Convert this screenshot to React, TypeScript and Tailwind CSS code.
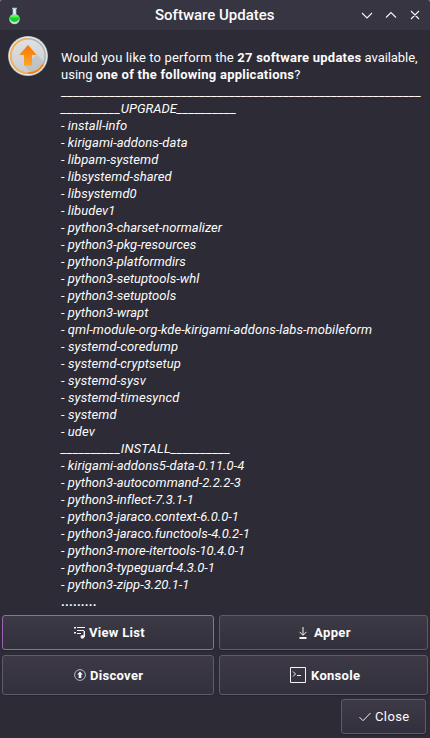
import React from "react";

const upgrades = [
  "install-info", "kirigami-addons-data", "libpam-systemd", "libsystemd-shared", "libsystemd0",
  "libudev1", "python3-charset-normalizer", "python3-pkg-resources", "python3-platformdirs",
  "python3-setuptools-whl", "python3-setuptools", "python3-wrapt",
  "qml-module-org-kde-kirigami-addons-labs-mobileform", "systemd-coredump", "systemd-cryptsetup",
  "systemd-sysv", "systemd-timesyncd", "systemd", "udev",
];

const installs = [
  "kirigami-addons5-data-0.11.0-4", "python3-autocommand-2.2.2-3", "python3-inflect-7.3.1-1",
  "python3-jaraco.context-6.0.0-1", "python3-jaraco.functools-4.0.2-1",
  "python3-more-itertools-10.4.0-1", "python3-typeguard-4.3.0-1", "python3-zipp-3.20.1-1",
];

function FlaskIcon() {
  return (
    <svg width="12" height="18" viewBox="0 0 12 18">
      <path d="M3 .8h5v1H7.3v5.4A5.2 5.2 0 1 1 3.7 7.2V1.8H3z" fill="#b9d3dc" />
      <path d="M4.4 2h2v5h-2z" fill="#d9f0f6" />
      <path d="M1 8.8h9.2a4.8 4.8 0 1 1-9.2 0z" fill="#12d422" />
      <path d="M1.4 9h8.4v1.4H1.2z" fill="#5cf060" />
      <path d="M3 15.6h5" stroke="#c4e6d0" strokeWidth="1" />
    </svg>
  );
}

function UpdateIcon() {
  return (
    <svg width="40" height="40" viewBox="0 0 40 40">
      <defs>
        <linearGradient id="disc" x1="0" y1="0" x2="0" y2="1">
          <stop offset="0" stopColor="#dfe1e2" /><stop offset="1" stopColor="#c9cccd" />
        </linearGradient>
        <linearGradient id="arrow" x1="0" y1="0" x2="0" y2="1">
          <stop offset="0" stopColor="#f67400" /><stop offset="1" stopColor="#fda62e" />
        </linearGradient>
      </defs>
      <circle cx="20" cy="20" r="20" fill="#a2a7aa" />
      <circle cx="20" cy="20" r="19.4" fill="#e3e7e8" />
      <circle cx="20" cy="20" r="18" fill="url(#disc)" />
      <path d="M29 19 36 26A17 17 0 0 1 23 36.5L16 29.4z" fill="#a9acae" opacity=".4" />
      <circle cx="20" cy="20" r="17.2" fill="none" stroke="#aeb1b3" strokeWidth="1.5" />
      <path d="M20 2.8A17.2 17.2 0 0 0 20 37.2" fill="none" stroke="#fdb04a" strokeWidth="1.6" />
      <path d="M20 37.2A17.2 17.2 0 0 0 35 28.5" fill="none" stroke="#f67f0c" strokeWidth="1.6" />
      <path d="M20 9 28.8 19H24V29.4H16V19H11.2z" fill="url(#arrow)" />
    </svg>
  );
}

function PlaylistIcon() {
  return (
    <svg width="12" height="13" viewBox="0 0 12 13" fill="#f4f4f5">
      <path d="M0 1h2v1.6H0zM0 6h2v1.6H0zM3 1h8v1H3zM3 4h7v1H3zM3 7h4v1H3zM9.6 5H11v6H9.6z" />
      <circle cx="8.4" cy="10.8" r="1.9" />
    </svg>
  );
}

function DiscoverIcon() {
  return (
    <svg width="12" height="12" viewBox="0 0 12 12">
      <circle cx="6" cy="6" r="5.4" fill="none" stroke="#bccad8" strokeWidth=".9" />
      <path d="M6 2.5 8.7 5.5H7.3V9H4.7V5.5H3.3z" fill="#f4f8fc" />
    </svg>
  );
}

function DownloadIcon() {
  return (
    <svg width="8" height="12" viewBox="0 0 8 12">
      <path d="M4 0v8M.5 4.8 4 8.3 7.5 4.8" fill="none" stroke="#f4f4f5" strokeWidth="1" />
      <path d="M.5 10h7v2h-7z" fill="#f4f4f5" />
    </svg>
  );
}

function KonsoleIcon() {
  return (
    <svg width="16" height="16" viewBox="0 0 16 16" fill="none" stroke="#f4f4f5">
      <path d="M.5 .5h15v15H.5zM3 4.5 5.5 7 3 9.5M7 8.5h4" />
    </svg>
  );
}

function Package({ name }: { name: string }) {
  const tracking = name.startsWith("systemd")
    ? "tracking-[0.12px]"
    : name.startsWith("python3")
      ? "tracking-[0.02px]"
      : "tracking-[0.06px]";
  return <p className={tracking}><span>- {name}</span></p>;
}

function Section({ title }: { title: string }) {
  const rule = "_".repeat(10);
  const tracking = title === "INSTALL" ? "tracking-[0.2px]" : "";
  return (
    <p>
      <span className="tracking-[0.29px]">{rule}</span><span className={tracking}>{title}</span><span className="tracking-[0.29px]">{rule}</span>
    </p>
  );
}

const button =
  "flex items-center rounded-[3px] border bg-linear-to-b from-[#3d3a46] to-[#32303c] shadow-[0_1px_1px_#25232d] whitespace-nowrap";

export default function App() {
  return (
    <div className="h-[738px] w-[430px] overflow-hidden bg-[#7b6a88]">
    <div className="flex h-[738px] w-[430px] flex-col overflow-hidden rounded-t-[4px] bg-[#2d2b36] font-['Roboto','Liberation_Sans',sans-serif] text-[13px] leading-[17px] text-[#fcfcfc]">
      <header className="flex h-[30px] shrink-0 items-center bg-[#373541] pl-[9px] pr-[10px]">
        <span className="w-[146px] pt-px"><FlaskIcon /></span>
        <h1 className="w-[202px] text-[15px] font-medium leading-[20px]"><span>Software Updates</span></h1>
        <svg width="60" height="12" viewBox="0 0 60 12" fill="none" stroke="#f4f4f5" strokeWidth="1.1" className="ml-auto shrink-0">
          <path d="M2 4 7 9 12 4M26 8.5 31 3.5 36 8.5M51 2 59 10M59 2 51 10" />
        </svg>
      </header>

      <main className="flex h-[583px] shrink-0 pl-[8px]">
        <div className="w-[53px] shrink-0 pt-[6px]"><UpdateIcon /></div>
        <div className="whitespace-nowrap pt-[19px]">
          <p><span className="tracking-[0.13px]">Would you like to perform the </span><b className="tracking-[0.24px]">27 software updates</b><span className="tracking-[-0.06px]"> available,</span></p>
          <p><span>using </span><b className="tracking-[0.24px]">one of the following applications</b><span>?</span></p>
          <p className="tracking-[0.13px]"><span>{"_".repeat(60)}</span></p>
          <div className="italic">
            <Section title="UPGRADE" />
            {upgrades.map((name) => <Package key={name} name={name} />)}
            <Section title="INSTALL" />
            {installs.map((name) => <Package key={name} name={name} />)}
          </div>
          <p><b className="tracking-[0.2px]">.........</b></p>
        </div>
      </main>

      <div className="grid grid-cols-[212px_209px] gap-x-[5px] gap-y-[5px] pl-[2px] pt-[2px] font-bold tracking-[0.3px]">
        <button className={`${button} h-[35px] border-[#9b65b4] pl-[71px] gap-[3px]`}><PlaylistIcon /><span>View List</span></button>
        <button className={`${button} h-[35px] border-[#5f5c68] pl-[79px] gap-[7px]`}><DownloadIcon /><span className="tracking-[0.4px]">Apper</span></button>
        <button className={`${button} h-[40px] border-[#5f5c68] pl-[71px] gap-[4px]`}><DiscoverIcon /><span>Discover</span></button>
        <button className={`${button} h-[40px] border-[#5f5c68] pl-[70px] gap-[5px]`}><KonsoleIcon /><span>Konsole</span></button>
      </div>
      <footer className="flex justify-end pr-[4px] pt-[4px]">
        <button className={`${button} h-[35px] w-[85px] border-[#5f5c68] pl-[17px] gap-[4px]`}>
          <svg width="12" height="10" viewBox="0 0 12 10" fill="none" stroke="#f4f4f5"><path d="M.5 5.2 4 8.7 11.5 1" /></svg>
          <span className="tracking-[0.4px]">Close</span>
        </button>
      </footer>
    </div>
    </div>
  );
}
